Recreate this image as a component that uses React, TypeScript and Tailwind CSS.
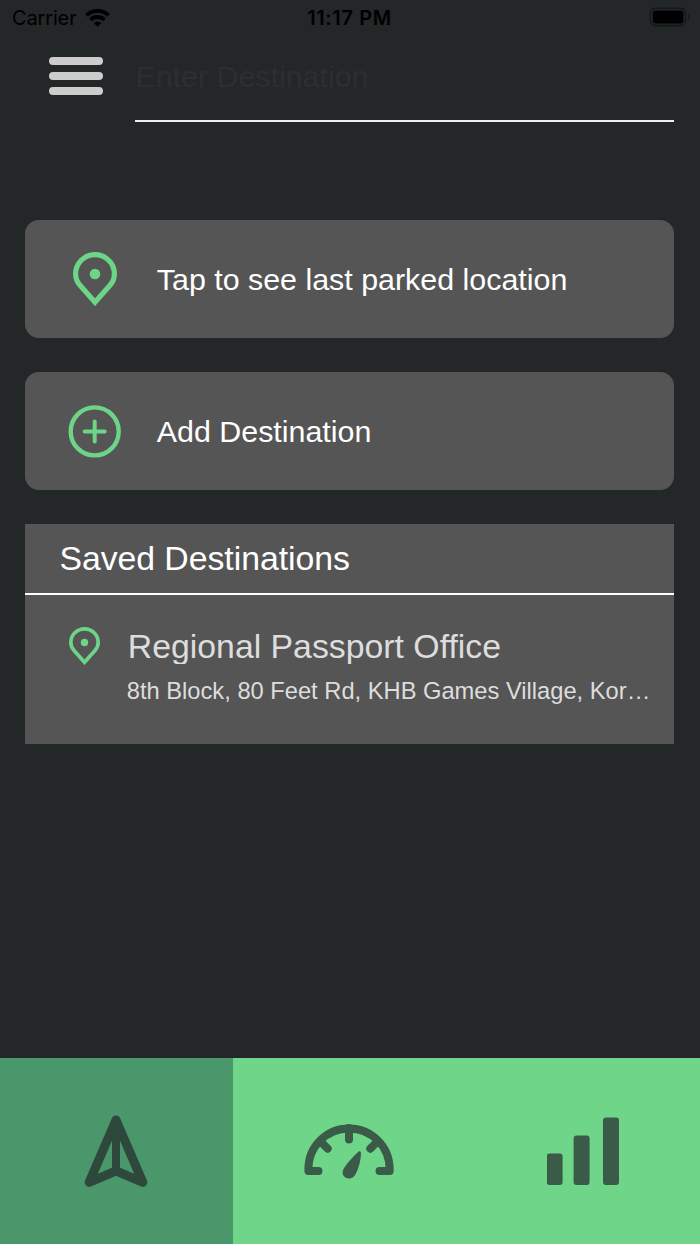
import React from 'react';

function PinIcon({ className }: { className: string }) {
    return (
        <svg viewBox="0 0 44 54" fill="none" className={className}>
            <path
                d="M22 50.2 L6.8 33 C4 29.8 2.6 26 2.6 22 A19.4 19.4 0 0 1 41.4 22 C41.4 26 40 29.8 37.2 33 Z"
                stroke="#6ed588"
                strokeWidth="5.2"
            />
            <circle cx="22" cy="22" r="5.3" fill="#6ed588" />
        </svg>
    );
}

function StatusBar() {
    return (
        <div className="grid h-9 grid-cols-3 items-center pl-3 pr-[9px] font-['Inter',sans-serif] text-[20px] leading-9 text-black">
            <div className="flex items-center gap-2">
                <span className="tracking-[-0.15px]">Carrier</span>
                <svg viewBox="0 0 25 19" className="mb-0.5 h-[19px] w-[25px]" fill="none" stroke="#000" strokeWidth="3.8">
                    <path d="M1.4 7.4 A15.8 15.8 0 0 1 23.6 7.4" />
                    <path d="M5.5 11.9 A9.9 9.9 0 0 1 19.5 11.9" />
                    <path d="M12.5 18.8 L8.7 15 A5.4 5.4 0 0 1 16.3 15 Z" fill="#000" stroke="none" />
                </svg>
            </div>
            <span className="-ml-1 text-center font-semibold tracking-[0.6px]">11:17 PM</span>
            <svg viewBox="0 0 42 20" className="mb-0.5 h-5 w-[42px] justify-self-end">
                <rect x="1.4" y="1.2" width="35.2" height="17.4" rx="5" fill="none" stroke="#16191a" strokeWidth="1.6" />
                <rect x="3.8" y="3.6" width="30.6" height="12.8" rx="2.4" fill="#000" />
                <path d="M39 7 C41.4 7.8 41.4 12 39 12.8 Z" fill="#16191a" />
            </svg>
        </div>
    );
}

function Header() {
    return (
        <header className="flex h-[86px] pl-[49.4px] pr-[25.6px]">
            <button aria-label="Menu" className="mt-[21px] flex h-[38px] w-[54px] flex-col justify-between">
                <span className="h-2 w-full rounded-full bg-[#cdcccd]" />
                <span className="h-2 w-full rounded-full bg-[#cdcccd]" />
                <span className="h-2 w-full rounded-full bg-[#cdcccd]" />
            </button>
            <div className="ml-8 flex-1 border-b-2 border-[#eeeeee]">
                <input
                    type="text"
                    placeholder="Enter Destination"
                    className="mt-[18px] h-11 w-full bg-transparent text-[30.4px] leading-[44px] text-white outline-none placeholder:text-[#2d2e31]"
                />
            </div>
        </header>
    );
}

export default function App() {
    return (
        <div className="flex h-[1244px] w-[700px] flex-col bg-[#232728] font-['Liberation_Sans',Arial,sans-serif]">
            <StatusBar />
            <Header />

            <main className="flex-1 pl-[25.4px] pr-[25.6px] pt-[98px]">
                <button className="flex h-[118px] w-full items-center rounded-[14px] bg-[#555555] text-left">
                    <PinIcon className="ml-[47.4px] h-[54px] w-11" />
                    <span className="ml-10 text-[30.4px] leading-none text-white">Tap to see last parked location</span>
                </button>

                <button className="mt-[34px] flex h-[118px] w-full items-center rounded-[14px] bg-[#555555] text-left">
                    <svg
                        viewBox="0 0 54 54"
                        className="ml-[42.4px] size-[54px]"
                        fill="none"
                        stroke="#6ed588"
                        strokeWidth="4.4"
                        strokeLinecap="round"
                    >
                        <circle cx="26.7" cy="27.4" r="24" />
                        <path d="M16.7 27.4 H36.7 M26.7 17.4 V37.4" strokeWidth="4" />
                    </svg>
                    <span className="ml-[35px] text-[30.4px] leading-none text-white">Add Destination</span>
                </button>

                <section className="mt-[34px] h-[219.5px] bg-[#555555]">
                    <h2 className="h-[71px] border-b-2 border-white pl-[34px] text-[33.8px] leading-[69px] tracking-[-0.04px] text-white">
                        Saved Destinations
                    </h2>
                    <div className="flex pt-8 pl-[43.4px]">
                        <PinIcon className="h-[38px] w-[31px]" />
                        <div className="ml-[27px] whitespace-nowrap text-[#dddddd]">
                            <h3 className="h-[37px] overflow-hidden pl-px text-[33.8px] leading-[38px]">Regional Passport Office</h3>
                            <p className="mt-[13px] text-[23.7px] leading-7">8th Block, 80 Feet Rd, KHB Games Village, Kor…</p>
                        </div>
                    </div>
                </section>
            </main>

            <nav className="grid h-[186px] grid-cols-3 bg-[#6fd689]">
                <button aria-label="Navigate" className="flex items-center justify-center bg-[#49976b]">
                    <svg
                        viewBox="0 0 64 72"
                        className="mr-0.5 h-[72px] w-16"
                        fill="none"
                        stroke="#2e493c"
                        strokeWidth="9"
                        strokeLinejoin="round"
                    >
                        <path d="M32 5 L5.2 67.4 L32 55.8 L58.8 67.4 Z" />
                        <path d="M32 5 V55.8" strokeWidth="8" />
                    </svg>
                </button>
                <button aria-label="Speed" className="flex items-center justify-center">
                    <svg
                        viewBox="0 0 90 57"
                        className="mb-0.5 mr-0.5 h-[57px] w-[90px]"
                        fill="none"
                        stroke="#3a5b47"
                        strokeWidth="8"
                        strokeLinecap="round"
                        strokeLinejoin="round"
                    >
                        <path d="M14.5 49 H4.4 V47 A40.6 40.6 0 0 1 85.6 47 V49 H75.5" />
                        <path d="M45 6 V17.5 M16.5 19.5 L23.7 26.7 M73.5 19.5 L66.3 26.7" />
                        <path
                            d="M53.8 30.2 C55.2 28.4 57 29 57 31.4 C56.8 38.5 55 45.5 51.4 52.6 C49.4 56.6 44.6 57.6 41.4 55.6 C38.2 53.4 37.8 49.8 39.8 46.6 C43.6 40 48.6 35.4 53.8 30.2 Z"
                            fill="#3a5b47"
                            stroke="none"
                        />
                    </svg>
                </button>
                <button aria-label="Statistics" className="flex items-center justify-center">
                    <svg viewBox="0 0 73 68" className="h-[68px] w-[73px]" fill="#3a5b47">
                        <rect x="-0.4" y="36.5" width="16" height="31.5" rx="3" />
                        <rect x="26.6" y="18.5" width="16" height="49.5" rx="3" />
                        <rect x="56" y="0.5" width="16" height="67.5" rx="3" />
                    </svg>
                </button>
            </nav>
        </div>
    );
}
